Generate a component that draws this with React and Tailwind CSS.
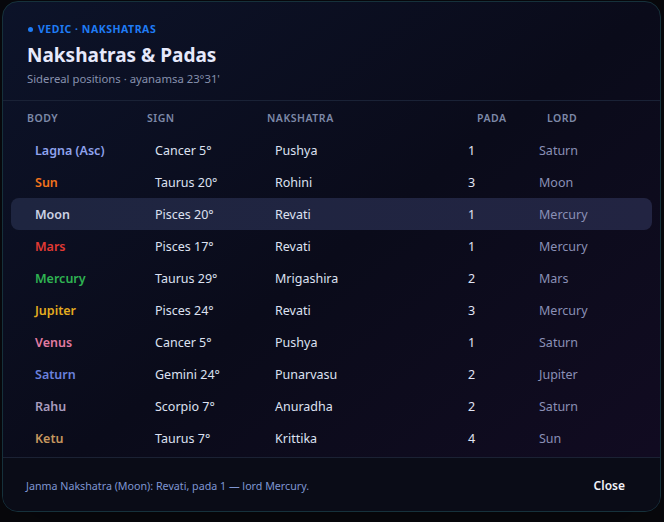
import React from 'react'

const rows = [
    { body: 'Lagna (Asc)', color: 'text-[#8fa3ee]', sign: 'Cancer 5°', nak: 'Pushya', pada: 1, lord: 'Saturn' },
    { body: 'Sun', color: 'text-[#f2731c]', sign: 'Taurus 20°', nak: 'Rohini', pada: 3, lord: 'Moon' },
    { body: 'Moon', color: 'text-[#cdd2e4]', sign: 'Pisces 20°', nak: 'Revati', pada: 1, lord: 'Mercury', active: true },
    { body: 'Mars', color: 'text-[#e23a34]', sign: 'Pisces 17°', nak: 'Revati', pada: 1, lord: 'Mercury' },
    { body: 'Mercury', color: 'text-[#2fb352]', sign: 'Taurus 29°', nak: 'Mrigashira', pada: 2, lord: 'Mars' },
    { body: 'Jupiter', color: 'text-[#e3ab1f]', sign: 'Pisces 24°', nak: 'Revati', pada: 3, lord: 'Mercury' },
    { body: 'Venus', color: 'text-[#e27ba2]', sign: 'Cancer 5°', nak: 'Pushya', pada: 1, lord: 'Saturn' },
    { body: 'Saturn', color: 'text-[#6a81dc]', sign: 'Gemini 24°', nak: 'Punarvasu', pada: 2, lord: 'Jupiter' },
    { body: 'Rahu', color: 'text-[#a89cbd]', sign: 'Scorpio 7°', nak: 'Anuradha', pada: 2, lord: 'Saturn' },
    { body: 'Ketu', color: 'text-[#c5975f]', sign: 'Taurus 7°', nak: 'Krittika', pada: 4, lord: 'Sun' },
]

const App = () => {
    return (
        <div className="min-h-[522px] bg-[#08080c] pt-px pl-[2px] font-['Noto_Sans',sans-serif]">
            <div className="w-[659px] rounded-2xl border border-[#16313b] overflow-hidden bg-gradient-to-br from-[#0c1329] via-[#0a0b1a] to-[#120b22] shadow-2xl">
                {/* header */}
                <div className="px-[24px] pt-[19px] pb-[13px] border-b border-[#1a2236]">
                    <div className="flex items-center gap-[5px] h-4">
                        <span className="ml-[1px] w-[5px] h-[5px] rounded-full bg-[#1f7cf5]"></span>
                        <span className="text-[10.5px] font-bold tracking-[0.05em] text-[#1f7cf5] leading-4">VEDIC · NAKSHATRAS</span>
                    </div>
                    <h2 className="mt-[4px] text-[19px] font-bold leading-7 text-[#e6e9fb]">Nakshatras &amp; Padas</h2>
                    <p className="mt-[2px] text-[11.3px] leading-4 text-[#8690ad]">Sidereal positions · ayanamsa 23°31'</p>
                </div>

                {/* table */}
                <div className="px-[8px] pb-[3px]">
                    <div className="grid grid-cols-[120px_120px_210px_70px_1fr] pl-4 pt-[2px] h-[33px] items-center text-[10.5px] font-semibold tracking-[0.05em] text-[#7d89a8]">
                        <span>BODY</span>
                        <span>SIGN</span>
                        <span>NAKSHATRA</span>
                        <span>PADA</span>
                        <span>LORD</span>
                    </div>
                    {rows.map((r, idx) => (
                        <div
                            key={idx}
                            className={`grid grid-cols-[120px_120px_193px_71px_1fr] pl-6 pt-[2px] h-8 items-center text-[12.5px] rounded-lg ${r.active ? 'bg-gradient-to-r from-[#1e2540] to-[#222442]' : ''}`}
                        >
                            <span className={`font-semibold ${r.color}`}>{r.body}</span>
                            <span className="text-[#dde1f1]">{r.sign}</span>
                            <span className="text-[#dde1f1]">{r.nak}</span>
                            <span className="text-[#e0e4f4]">{r.pada}</span>
                            <span className="text-[#8a90b6]">{r.lord}</span>
                        </div>
                    ))}
                </div>

                {/* footer */}
                <div className="flex items-center justify-between h-[54px] pt-[3px] pl-[23px] pr-[35px] border-t border-[#1b2234] bg-[#0a0c17]">
                    <p className="text-[10.7px] text-[#7f96d2]">Janma Nakshatra (Moon): Revati, pada 1 — lord Mercury.</p>
                    <button className="text-[12px] font-semibold text-[#f1f2f8]">Close</button>
                </div>
            </div>
        </div>
    )
}

export default App
